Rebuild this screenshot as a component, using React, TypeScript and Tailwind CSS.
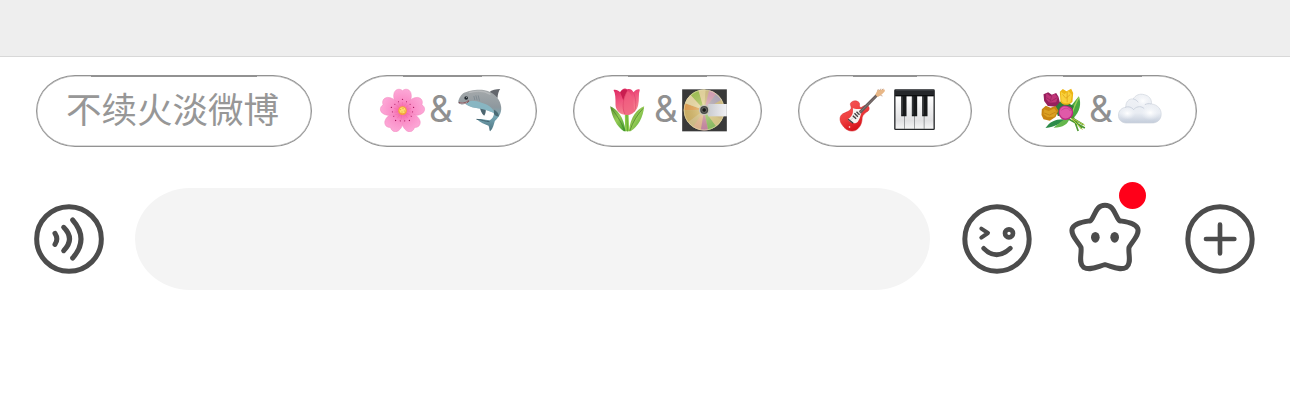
import React from 'react';

interface ChipProps {
  className: string;
  lineClass: string;
  children: React.ReactNode;
}

function Chip({ className, lineClass, children }: ChipProps) {
  return (
    <div
      className={`relative flex h-[72px] shrink-0 items-center rounded-[39px/36px] border border-[#939393] shadow-[inset_0_0_0_0.5px_#b5b5b5] ${className}`}
    >
      <span className={`absolute -top-px h-[2px] bg-[#929292] ${lineClass}`} />
      {children}
    </div>
  );
}

function Amp() {
  return (
    <span className="-mt-[2px] flex w-[26px] justify-center font-['Inter',sans-serif] text-[37px] leading-none font-normal text-[#909090]">
      &amp;
    </span>
  );
}

function Blossom() {
  return (
    <svg viewBox="120 68 140 132" className="h-[44px] w-[47px]">
      <defs>
        <radialGradient id="petal" gradientUnits="userSpaceOnUse" cx="190" cy="135" r="68">
          <stop offset="0" stopColor="#f5559d" />
          <stop offset="0.4" stopColor="#fa8cc6" />
          <stop offset="1" stopColor="#fdabd9" />
        </radialGradient>
      </defs>
      {[0, 72, 144, 216, 288].map((angle) => (
        <g key={angle} transform={`rotate(${angle} 190 137)`}>
          <path
            d="M190 137C176 122 158 104 165 82C170 70 182 69 190 76C198 69 210 70 215 82C222 104 204 122 190 137Z"
            fill="url(#petal)"
            stroke="#f286bd"
            strokeWidth="1.5"
          />
          <path d="M190 130V110M186 128L178 113M194 128L202 113" stroke="#ee6aa8" strokeWidth="1.2" />
          <circle cx="190" cy="102" r="2" fill="#a31155" />
          <circle cx="178" cy="109" r="1.6" fill="#a31155" />
          <circle cx="202" cy="109" r="1.6" fill="#a31155" />
        </g>
      ))}
      <circle cx="190" cy="136" r="13" fill="#f5a43c" />
      <circle cx="190" cy="135" r="9" fill="#ffdf6c" />
      <path d="M183 133h3M190 130h3M194 137h3M187 140h3" stroke="#cf791c" strokeWidth="2" />
    </svg>
  );
}

function Shark() {
  return (
    <svg viewBox="350 68 140 132" className="h-[44px] w-[47px]">
      <defs>
        <linearGradient id="sharkBody" x1="0" y1="0" x2="0" y2="1">
          <stop offset="0" stopColor="#a5a9ab" />
          <stop offset="0.42" stopColor="#8e989e" />
          <stop offset="0.65" stopColor="#75a7b5" />
          <stop offset="1" stopColor="#4f7480" />
        </linearGradient>
      </defs>
      <path d="M448 82C457 73 470 71 482 71C477 78 475 87 474 98Z" fill="#63666c" />
      <path d="M420 124C423 134 426 145 434 151C439 145 440 135 438 127Z" fill="#4d6670" />
      <path
        d="M356 112C356 104 361 92 371 84C388 75 422 69 445 77C468 85 483 105 485 125C487 143 477 157 466 167C463 177 461 189 452 198C449 195 450 187 447 181C435 177 423 172 412 162C426 158 441 164 451 165C458 161 463 153 464 143C451 137 438 132 424 130C405 128 389 124 377 115C370 119 363 118 356 112Z"
        fill="url(#sharkBody)"
      />
      <path d="M377 115C392 101 410 107 426 112C444 117 462 127 464 143C450 137 438 132 424 130C405 128 389 124 377 115Z" fill="#86bfcd" opacity=".75" />
      <path d="M464 133C471 137 479 145 478 153C472 154 466 150 463 145Z" fill="#496b76" />
      <path d="M411 162C425 162 438 169 450 169" stroke="#456673" strokeWidth="3" fill="none" />
      <path d="M358 112C370 114 381 116 388 106" stroke="#7c4a50" strokeWidth="4" fill="none" />
      <path d="M361 113L377 114L384 109" stroke="#eee" strokeWidth="1.5" fill="none" />
      <circle cx="380" cy="98" r="5.5" fill="#20272c" />
      <circle cx="381" cy="96" r="1.5" fill="#b4bfc4" />
      <path d="M403 92L406 104M409 90L413 105M416 90L420 106" stroke="#667780" strokeWidth="1.5" />
      <path d="M388 82C410 75 434 76 453 87" stroke="#c4c7c8" strokeWidth="4" fill="none" opacity=".6" />
    </svg>
  );
}

function Tulip() {
  return (
    <svg viewBox="120 68 140 132" className="h-[44px] w-[47px]">
      <defs>
        <linearGradient id="tulipHead" x1="0" y1="0" x2="0.4" y2="1">
          <stop offset="0" stopColor="#dc2460" />
          <stop offset="0.5" stopColor="#f0567f" />
          <stop offset="1" stopColor="#f58a92" />
        </linearGradient>
        <linearGradient id="tulipLeaf" x1="0" y1="0" x2="1" y2="1">
          <stop offset="0" stopColor="#59922e" />
          <stop offset="0.5" stopColor="#96cb55" />
          <stop offset="1" stopColor="#3a9b2d" />
        </linearGradient>
      </defs>
      <path d="M182 144H193L195 198H183Z" fill="#8dcb48" />
      <path d="M188 146L190 198" stroke="#64a936" strokeWidth="3" />
      <path d="M138 123C158 132 179 153 184 198H179C157 183 144 157 138 123Z" fill="url(#tulipLeaf)" />
      <path d="M240 123C219 132 199 153 194 198H199C223 184 237 155 240 123Z" fill="url(#tulipLeaf)" />
      <path d="M141 129C155 145 171 168 181 196M237 129C221 146 206 169 197 196" stroke="#437c28" strokeWidth="2" fill="none" />
      <path d="M148 74C156 72 163 76 168 81C173 71 182 67 189 72C197 68 206 74 208 81C214 74 221 70 227 73C222 87 226 102 222 119C219 136 204 148 188 149C169 149 155 137 154 119C154 99 154 84 148 74Z" fill="url(#tulipHead)" />
      <path d="M168 81C174 73 183 70 190 76C184 87 180 96 178 107C175 98 171 89 168 81Z" fill="#c91d50" />
      <path d="M190 76C201 82 209 105 210 139C203 147 195 149 188 149C172 147 170 107 190 76Z" fill="#f0607f" opacity=".72" />
      <path d="M190 76C178 96 172 125 182 147M208 82C216 101 217 119 211 139" stroke="#dc4268" strokeWidth="1.7" fill="none" />
    </svg>
  );
}

function Disc() {
  return (
    <svg viewBox="350 68 140 132" className="h-[44px] w-[47px]">
      <defs>
        <radialGradient id="discShine">
          <stop offset="0" stopColor="#fff4c9" stopOpacity=".5" />
          <stop offset="1" stopColor="#a98543" stopOpacity=".2" />
        </radialGradient>
        <linearGradient id="shutter">
          <stop offset="0" stopColor="#c9cbd0" />
          <stop offset="1" stopColor="#f1f1f4" />
        </linearGradient>
      </defs>
      <rect x="353" y="72" width="134" height="126" fill="#393939" />
      <circle cx="419" cy="134" r="61" fill="#d5c795" />
      <path d="M419 134L378 89A61 61 0 0 1 402 75Z" fill="#9acb5a" />
      <path d="M419 134L402 75A61 61 0 0 1 423 73Z" fill="#ece2b1" />
      <path d="M419 134L434 75A61 61 0 0 1 455 85Z" fill="#d9a1d0" />
      <path d="M419 134L455 85A61 61 0 0 1 471 103Z" fill="#adabd5" />
      <path d="M419 134L358 135A61 61 0 0 1 362 114Z" fill="#e5a055" />
      <path d="M419 134L362 114A61 61 0 0 1 378 89Z" fill="#eee4ba" />
      <path d="M419 134L370 171A61 61 0 0 1 358 135Z" fill="#cfb66c" />
      <path d="M419 134L409 194A61 61 0 0 1 386 185Z" fill="#e9bda1" />
      <path d="M419 134L431 194A61 61 0 0 1 409 194Z" fill="#c681b7" />
      <path d="M419 134L455 183A61 61 0 0 1 431 194Z" fill="#80c86b" />
      <path d="M419 134L472 163A61 61 0 0 1 455 183Z" fill="#ddd396" />
      <circle cx="419" cy="134" r="60" fill="url(#discShine)" stroke="#e0d4a5" strokeWidth="2" />
      <path d="M430 116H487V153H430Z" fill="url(#shutter)" />
      <circle cx="419" cy="134" r="16" fill="#c9c6b9" />
      <circle cx="419" cy="134" r="12" fill="#474947" />
      <circle cx="419" cy="134" r="7" fill="#191b1b" stroke="#88877e" strokeWidth="2" />
    </svg>
  );
}

function Guitar() {
  return (
    <svg viewBox="150 68 140 132" className="h-[44px] w-[47px]">
      <defs>
        <linearGradient id="guitarBody" x1="0" y1="0" x2="0.5" y2="1">
          <stop offset="0" stopColor="#f55b5c" />
          <stop offset="0.55" stopColor="#ef3f3f" />
          <stop offset="1" stopColor="#d40d15" />
        </linearGradient>
      </defs>
      <path
        d="M184 114C189 105 203 104 210 112C213 118 209 123 213 126C219 128 223 119 232 120C241 122 242 131 237 137C229 142 221 148 219 157C219 172 214 185 201 194C187 202 169 195 160 180C150 167 150 153 160 146C170 140 182 139 186 129C187 123 182 119 184 114Z"
        fill="url(#guitarBody)"
        stroke="#d62e32"
        strokeWidth="1.5"
      />
      <path d="M191 128C200 134 212 129 222 132C213 144 216 156 206 169C196 179 181 171 176 162C188 153 193 146 191 128Z" fill="#f6f3f0" />
      <path d="M209 138L260 87L266 93L215 145Z" fill="#655a59" />
      <path d="M212 141L263 91" stroke="#aaa4a2" strokeWidth="1.3" />
      <path d="M258 88L265 75L284 72C289 73 288 79 283 82L275 90L266 95Z" fill="#e8b787" />
      <path d="M265 76L268 71M272 75L275 70M279 74L282 70M274 90L280 92" stroke="#b58c72" strokeWidth="2" />
      <path d="M191 151L201 160M196 144L206 154M202 139L211 148M177 162L192 174" stroke="#3d383a" strokeWidth="4" />
      <path d="M181 166L213 141" stroke="#8d8a88" strokeWidth="1" />
      <circle cx="181" cy="185" r="2.5" fill="#fff" />
    </svg>
  );
}

function Piano() {
  return (
    <svg viewBox="303 68 140 132" className="h-[44px] w-[47px]">
      <defs>
        <linearGradient id="pianoKeys" x1="0" y1="0" x2="0" y2="1">
          <stop offset="0" stopColor="#ffffff" />
          <stop offset="0.75" stopColor="#e1e1e3" />
          <stop offset="1" stopColor="#f5f5f5" />
        </linearGradient>
      </defs>
      <rect x="312" y="72" width="122" height="122" rx="4" fill="#25272a" />
      <path d="M316 93H430V190H316Z" fill="url(#pianoKeys)" />
      <path d="M343 93V191M373 93V191M402 93V191" stroke="#707276" strokeWidth="2" />
      <path d="M316 91H430" stroke="#090a0b" strokeWidth="3" />
      <path d="M333 92H349V153H333ZM365 92H381V153H365ZM396 92H412V153H396Z" fill="#17191b" />
      <path d="M336 94V148M368 94V148M399 94V148" stroke="#575a5e" strokeWidth="2" />
      <path d="M317 75H430" stroke="#4a4d51" strokeWidth="2" />
    </svg>
  );
}

function Bouquet() {
  return (
    <svg viewBox="120 68 140 132" className="h-[44px] w-[47px]">
      <path d="M215 123L239 93C247 116 243 139 221 160Z" fill="#4aa742" />
      <path d="M219 144C223 126 231 111 239 96" stroke="#9bd057" strokeWidth="4" fill="none" />
      <path d="M139 188C153 168 170 160 199 162C185 174 168 185 139 188Z" fill="#2c8b49" />
      <path d="M163 187C178 176 188 163 211 158C208 176 192 187 163 187Z" fill="#63b64c" />
      <path d="M183 116L248 190M175 132L253 178M207 112L237 197M164 136L257 188" stroke="#4d9931" strokeWidth="5" />
      <path d="M216 158L250 193M221 160L257 180" stroke="#b9ca49" strokeWidth="3" />
      <path d="M164 116L192 106L224 122L214 150L176 152Z" fill="#2f7d3a" />
      <path d="M182 79L191 71L202 78L216 70L222 83L220 109C211 121 192 122 184 110Z" fill="#edb617" />
      <path d="M185 79L196 87L207 77L218 88L214 111C203 117 191 113 187 107Z" fill="#f9d23c" />
      <path d="M190 87L200 99L213 88M204 80V111" stroke="#dd9a17" strokeWidth="2" fill="none" />
      <path d="M133 87L147 81L158 88L171 83L178 94L182 111L169 124L146 122L135 107Z" fill="#96205d" />
      <path d="M141 84L154 93L166 85L176 96L171 111L151 112L141 102Z" fill="#c03478" />
      <path d="M142 97L157 107L174 97M158 91L151 114" stroke="#9b2560" strokeWidth="2.5" fill="none" />
      <path d="M128 132L140 121L154 127L169 122L178 136L169 155L152 166L133 162L127 149Z" fill="#c88512" />
      <path d="M134 132L149 137L165 129L173 140L165 154L145 156L133 147Z" fill="#dba022" />
      <path d="M135 143L151 149L170 140" stroke="#bd7a12" strokeWidth="2" fill="none" />
      <path d="M182 129C189 118 200 119 207 123C220 125 224 138 221 149C215 163 199 168 187 160C178 153 176 139 182 129Z" fill="#bd2a83" />
      <path d="M184 130C194 118 212 125 218 138C219 153 206 162 195 159C182 154 178 141 184 130Z" fill="#e05aa8" />
      <path d="M187 135C197 126 207 127 214 137" stroke="#c3398c" strokeWidth="2.2" fill="none" />
    </svg>
  );
}

function Cloud() {
  return (
    <svg viewBox="350 68 140 132" className="h-[44px] w-[47px]">
      <defs>
        <linearGradient id="cloudFill" x1="0" y1="0" x2="0" y2="1">
          <stop offset="0" stopColor="#f0f2f6" />
          <stop offset="0.65" stopColor="#e9edf3" />
          <stop offset="1" stopColor="#c3ccda" />
        </linearGradient>
        <radialGradient id="cloudPuff">
          <stop offset="0" stopColor="#fff" />
          <stop offset="1" stopColor="#f0f3f8" stopOpacity="0" />
        </radialGradient>
      </defs>
      <path
        d="M379 173C365 172 356 162 357 149C357 137 366 127 379 126C378 110 388 99 401 101C408 89 421 84 434 88C449 91 457 102 456 116C474 118 486 131 485 148C484 164 473 173 457 173Z"
        fill="url(#cloudFill)"
        stroke="#cdd3dd"
        strokeWidth="2"
      />
      <ellipse cx="430" cy="107" rx="24" ry="20" fill="url(#cloudPuff)" />
      <ellipse cx="384" cy="144" rx="24" ry="19" fill="url(#cloudPuff)" />
      <ellipse cx="452" cy="142" rx="29" ry="23" fill="url(#cloudPuff)" />
      <path d="M377 126C387 122 398 126 403 134M404 131C413 122 427 122 434 130M455 116C449 114 442 115 436 118M401 101C408 102 413 106 416 111" stroke="#c5cdd9" strokeWidth="2.5" fill="none" />
    </svg>
  );
}

function VoiceIcon() {
  return (
    <svg viewBox="42 42 210 210" className="size-[70px] shrink-0" fill="none" stroke="#4c4c4c" strokeLinecap="round">
      <circle cx="147" cy="147" r="97" strokeWidth="15" />
      <path d="M105 130Q116 147 105 163" strokeWidth="15" />
      <path d="M131 112Q166 147 131 182" strokeWidth="15" />
      <path d="M158 90Q208 147 158 204" strokeWidth="15" />
    </svg>
  );
}

function SmileIcon() {
  return (
    <svg viewBox="36 101 210 210" className="size-[70px] shrink-0" fill="none" stroke="#4c4c4c" strokeLinecap="round">
      <circle cx="141" cy="206" r="96.5" strokeWidth="15" />
      <path d="M94 175L114 188L94 202" strokeWidth="12" strokeLinejoin="round" />
      <circle cx="177" cy="189" r="12" strokeWidth="14" />
      <path d="M101 234Q139 273 181 234" strokeWidth="14" />
    </svg>
  );
}

function StarIcon() {
  return (
    <svg viewBox="360 101 210 210" className="size-[70px] overflow-visible" fill="none" stroke="#4c4c4c">
      <path
        d="M465 105C494 105 494 136 508 151C530 155 555 157 563 174C570 193 546 214 537 231C534 252 546 277 529 291C510 302 486 288 465 283C444 288 420 302 401 291C384 277 396 252 393 231C384 214 360 193 367 174C375 157 400 155 422 151C436 136 436 105 465 105Z"
        strokeWidth="15"
        strokeLinejoin="round"
      />
      <ellipse cx="436" cy="201" rx="13" ry="16" fill="#4c4c4c" stroke="none" />
      <ellipse cx="494" cy="201" rx="13" ry="16" fill="#4c4c4c" stroke="none" />
    </svg>
  );
}

function PlusIcon() {
  return (
    <svg viewBox="45 42 210 210" className="size-[70px] shrink-0" fill="none" stroke="#4c4c4c" strokeLinecap="round">
      <circle cx="150" cy="147" r="96.5" strokeWidth="15" />
      <path d="M108 147H193M150 104V190" strokeWidth="14" />
    </svg>
  );
}

export default function App() {
  return (
    <div className="h-[416px] w-[1290px] overflow-hidden bg-white">
      <div className="h-[57px] border-b border-[#d8d8d8] bg-[#eeeeee]" />

      <div className="flex gap-9 pt-[18px] pl-9">
        <Chip className="w-[276px] pl-[29px]" lineClass="inset-x-[54px]">
          <span className="-mt-[6px] font-['Noto_Sans_CJK_SC',sans-serif] text-[35.5px] leading-none font-normal whitespace-nowrap text-[#979797]">
            不续火淡微博
          </span>
        </Chip>
        <Chip className="w-[189px] justify-center gap-[2px] pr-[3px] pb-[3px]" lineClass="inset-x-[54px]">
          <Blossom />
          <Amp />
          <Shark />
        </Chip>
        <Chip className="w-[189px] justify-center gap-[2px] pr-[3px] pb-[3px]" lineClass="inset-x-[54px]">
          <Tulip />
          <Amp />
          <Disc />
        </Chip>
        <Chip className="w-[174px] gap-[5px] pb-[3px] pl-[40px]" lineClass="inset-x-[54px]">
          <Guitar />
          <Piano />
        </Chip>
        <Chip className="w-[189px] justify-center gap-[2px] pr-[3px] pb-[3px]" lineClass="inset-x-[54px]">
          <Bouquet />
          <Amp />
          <Cloud />
        </Chip>
      </div>

      <div className="mt-[41px] flex h-[102px] items-center pl-[34px]">
        <VoiceIcon />
        <div className="ml-[31px] h-[102px] w-[795px] rounded-[55px/51px] bg-[#f4f4f4]" />
        <div className="ml-8">
          <SmileIcon />
        </div>
        <div className="relative ml-[38px]">
          <StarIcon />
          <span className="absolute -top-[22px] left-[49px] size-[27px] rounded-full bg-[#ff0019]" />
        </div>
        <div className="ml-[45px]">
          <PlusIcon />
        </div>
      </div>
    </div>
  );
}
